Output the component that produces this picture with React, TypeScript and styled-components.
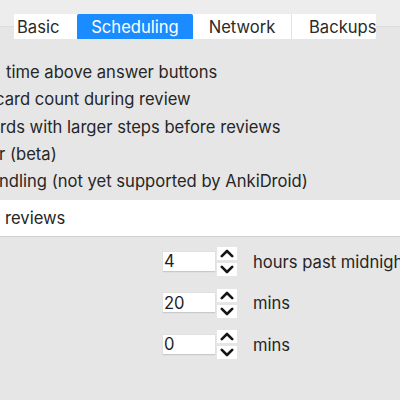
import React from "react";
import styled, { createGlobalStyle } from "styled-components";

const Global = createGlobalStyle`
  html, body { margin: 0; padding: 0; }
  body {
    width: 400px;
    height: 400px;
    overflow: hidden;
    font-family: Inter, "Liberation Sans", sans-serif;
    -webkit-font-smoothing: antialiased;
  }
`;

const Page = styled.div`
  width: 400px;
  height: 400px;
  overflow: hidden;
  background: linear-gradient(
    to bottom,
    #ededed 0,
    #ededed 26px,
    #dcdcdc 26px,
    #dcdcdc 27px,
    #e6e6e6 27px
  );
  display: flex;
  flex-direction: column;
  color: #262626;
`;

const TabBar = styled.div`
  display: flex;
  margin: 14px 0 0 14px;
  height: 25px;
`;

const Tab = styled.div<{ $active?: boolean; $w: number; $pad?: number; $sep?: boolean }>`
  width: ${(p) => p.$w}px;
  flex-shrink: 0;
  box-sizing: border-box;
  display: flex;
  align-items: center;
  justify-content: ${(p) => (p.$pad !== undefined ? "flex-start" : "center")};
  padding-left: ${(p) => p.$pad ?? 0}px;
  overflow: hidden;
  white-space: nowrap;
  background: ${(p) => (p.$active ? "#1a8cff" : "#ffffff")};
  color: ${(p) => (p.$active ? "#ffffff" : "#2a2a2a")};
  border-left: ${(p) => (p.$sep ? "1px solid #e2e2e2" : "none")};
  font-size: 16.6px;
  border-radius: ${(p) => (p.$active ? "2px 2px 0 0" : "0")};
`;

const Checks = styled.div`
  margin-top: 20px;
  display: flex;
  flex-direction: column;
  overflow: hidden;
`;

const CheckLine = styled.div<{ $indent: number }>`
  height: 27.25px;
  line-height: 27.25px;
  font-size: 16.6px;
  white-space: nowrap;
  margin-left: ${(p) => p.$indent}px;
`;

const Band = styled.div`
  margin-top: 5px;
  height: 36px;
  flex-shrink: 0;
  background: #ffffff;
  border-bottom: 1px solid #cfcfcf;
  display: flex;
  align-items: center;
  padding-left: 5px;
  font-size: 16.6px;
  color: #262626;
`;

const SpinGroup = styled.div`
  margin: 10px 0 0 163px;
  display: flex;
  flex-direction: column;
  gap: 12.5px;
`;

const SpinRow = styled.div`
  display: flex;
  align-items: center;
  height: 29px;
`;

const Field = styled.div`
  width: 52px;
  height: 20px;
  flex-shrink: 0;
  box-sizing: border-box;
  background: #ffffff;
  border-bottom: 1px solid #c9c9c9;
  box-shadow: 0 0 0 0.5px #dadada;
  display: flex;
  align-items: center;
  padding-left: 1px;
  font-size: 16.6px;
  color: #1e1e1e;
`;

const Stepper = styled.div`
  margin-left: 2px;
  width: 20px;
  height: 29px;
  flex-shrink: 0;
  display: flex;
  flex-direction: column;
  justify-content: space-between;
`;

const StepHalf = styled.div`
  height: 13px;
  background: #ffffff;
  display: flex;
  align-items: center;
  justify-content: center;
`;

const Unit = styled.div`
  margin-left: 16px;
  flex-shrink: 0;
  font-size: 16.6px;
  white-space: nowrap;
  color: #262626;
`;

const Chevron = ({ up }: { up?: boolean }) => (
  <svg width="14" height="9" viewBox="0 0 14 9">
    <path
      d={up ? "M1.8 7.2 L7 2 L12.2 7.2" : "M1.8 1.8 L7 7 L12.2 1.8"}
      fill="none"
      stroke="#161616"
      strokeWidth="2.6"
      strokeLinecap="round"
      strokeLinejoin="round"
    />
  </svg>
);

const Spin = ({ value, unit }: { value: string; unit: string }) => (
  <SpinRow>
    <Field>{value}</Field>
    <Stepper>
      <StepHalf>
        <Chevron up />
      </StepHalf>
      <StepHalf>
        <Chevron />
      </StepHalf>
    </Stepper>
    <Unit>{unit}</Unit>
  </SpinRow>
);

const lines: { text: string; indent: number }[] = [
  { text: "time above answer buttons", indent: 6 },
  { text: "card count during review", indent: -5 },
  { text: "rds with larger steps before reviews", indent: 0 },
  { text: "r (beta)", indent: -1 },
  { text: "ndling (not yet supported by AnkiDroid)", indent: -1 },
];

export default function App() {
  return (
    <>
      <Global />
      <Page>
        <TabBar>
          <Tab $w={63} $pad={3}>Basic</Tab>
          <Tab $w={116} $active>Scheduling</Tab>
          <Tab $w={98}>Network</Tab>
          <Tab $w={85} $pad={17} $sep>Backups</Tab>
        </TabBar>
        <Checks>
          {lines.map((l) => (
            <CheckLine key={l.text} $indent={l.indent}>
              {l.text}
            </CheckLine>
          ))}
        </Checks>
        <Band>reviews</Band>
        <SpinGroup>
          <Spin value="4" unit="hours past midnight" />
          <Spin value="20" unit="mins" />
          <Spin value="0" unit="mins" />
        </SpinGroup>
      </Page>
    </>
  );
}
